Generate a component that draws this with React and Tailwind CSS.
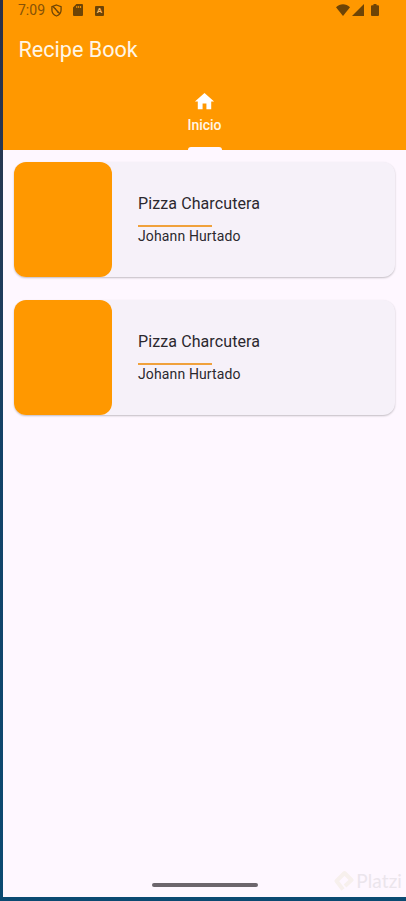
import React from "react";

const recipes = [
  { id: 1, name: "Pizza Charcutera", author: "Johann Hurtado" },
  { id: 2, name: "Pizza Charcutera", author: "Johann Hurtado" },
];

const StatusBar = () => {
  return (
    <div className="flex items-center h-5 pl-[15px] pr-[27px] text-[#6d4406]">
      <span className="w-[33px] text-[14px] leading-5 whitespace-nowrap text-[#865207]">7:09</span>
      <svg className="w-[11px] h-[13px]" viewBox="0 0 12 14" fill="none" stroke="currentColor" strokeWidth="1.4">
        <path d="M6 1 L11 2.8 V6.5 C11 9.6 8.8 12 6 13 C3.2 12 1 9.6 1 6.5 V2.8 Z" />
        <path d="M2.2 2.6 L9.6 10.6 M4.6 4.4 C4.6 6.4 7.4 7 7.4 9.4" />
      </svg>
      <svg className="w-[10px] h-[12px] ml-[11px]" viewBox="0 0 10 12" fill="currentColor">
        <path
          fillRule="evenodd"
          d="M3.4 0 H9 A1 1 0 0 1 10 1 V11 A1 1 0 0 1 9 12 H1 A1 1 0 0 1 0 11 V3.4 Z M3.3 2 V4 H4.3 V2 Z M5.2 2 V4 H6.2 V2 Z M7.1 2 V4 H8.1 V2 Z"
        />
      </svg>
      <span className="flex items-center justify-center w-[9px] h-[10px] mt-px ml-[12px] rounded-[1px] bg-[#6d4406] text-[#ffb85a] text-[8px] leading-none font-bold">
        A
      </span>
      <svg className="w-[14px] h-[12px] ml-auto" viewBox="0 0 14 12" fill="currentColor">
        <path d="M7 12 L0 3.2 C4 -0.8 10 -0.8 14 3.2 Z" />
      </svg>
      <svg className="w-[12px] h-[12px] ml-[2px]" viewBox="0 0 12 12" fill="currentColor">
        <path d="M12 0 V12 H0 Z" />
      </svg>
      <svg className="w-[8px] h-[12px] ml-[7px]" viewBox="0 0 8 12" fill="currentColor">
        <path d="M2.5 0 H5.5 V1.2 H7 A1 1 0 0 1 8 2.2 V11 A1 1 0 0 1 7 12 H1 A1 1 0 0 1 0 11 V2.2 A1 1 0 0 1 1 1.2 H2.5 Z" />
      </svg>
    </div>
  );
};

const RecipeCard = ({ name, author }) => {
  return (
    <div className="flex h-[115px] rounded-[12px] bg-[#f6f1f9] shadow-[0_1px_2px_rgba(0,0,0,0.24)]">
      <div className="w-[98px] h-full rounded-[12px] bg-[#ff9800]"></div>
      <div className="flex flex-col items-start pl-[26px] pt-[31px] text-[#2b282e]">
        <p className="text-[16px] leading-[22px] tracking-[0.1px]">{name}</p>
        <div className="w-[74px] h-[2px] mt-[10px] bg-[#f0a13c]"></div>
        <p className="text-[14px] leading-[18px] tracking-[0.13px]">{author}</p>
      </div>
    </div>
  );
};

const App = () => {
  return (
    <div className="h-[901px] w-full overflow-hidden pl-[3px] pb-[4px] bg-linear-to-b from-[#2b3047] via-[#134268] to-[#0b4a72] font-[Roboto,sans-serif]">
      <div className="flex flex-col h-full bg-[#fef7ff]">
        <header className="flex flex-col h-[150px] shrink-0 bg-[#ff9800]">
          <StatusBar />
          <h1 className="pl-[15.5px] mt-[16px] text-[21.6px] leading-7 text-[#fff6e6]">Recipe Book</h1>
          <div className="flex flex-col items-center self-center w-[34px] mt-[26px] text-white">
            <svg className="w-[23px] h-[23px]" viewBox="0 0 24 24" fill="currentColor">
              <path d="M10 20v-6h4v6h5v-8h3L12 3 2 12h3v8z" />
            </svg>
            <span className="mt-[2px] text-[14px] leading-[20px] font-medium text-[#fff6e6]">Inicio</span>
            <div className="w-[34px] h-[3px] mt-[12px] rounded-t-[3px] bg-[#fef7ff]"></div>
          </div>
        </header>

        <main className="flex flex-col grow gap-[23px] pt-[12px] pl-[11px] pr-[11px]">
          {recipes.map((recipe) => (
            <RecipeCard key={recipe.id} name={recipe.name} author={recipe.author} />
          ))}
        </main>

        <footer className="flex items-end h-[32px] pl-[149px]">
          <div className="w-[106px] h-[4px] mb-[10px] rounded-full bg-[#6c666c]"></div>
          <div className="flex items-center ml-auto mr-[4px] mb-[5px] text-[#ebe5ec]">
            <svg className="w-[20px] h-[22px] mr-[2px]" viewBox="0 0 20 22" fill="none" stroke="#f7f0ed" strokeWidth="4">
              <path d="M9 19.5 L2.5 11 L10.5 3 L17.5 10 L11 16" strokeLinejoin="round" />
            </svg>
            <span className="font-[Lato,sans-serif] text-[19px] leading-[22px] tracking-[0.1px]">Platzi</span>
          </div>
        </footer>
      </div>
    </div>
  );
};

export default App;
